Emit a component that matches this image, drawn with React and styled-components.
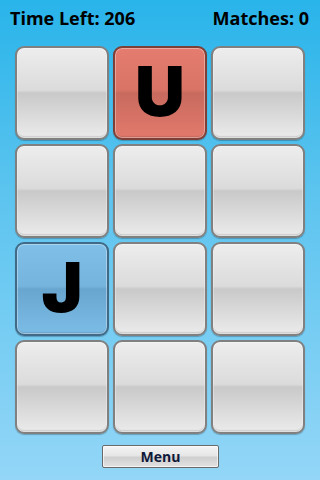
import React from 'react'
import styled, { createGlobalStyle } from 'styled-components'

const GlobalStyle = createGlobalStyle`
  html, body {
    margin: 0;
    padding: 0;
  }
  body {
    font-family: "Open Sans", "DejaVu Sans", sans-serif;
  }
`

const cards = [
  { id: 0 },
  { id: 1, letter: 'U', tone: 'red' },
  { id: 2 },
  { id: 3 },
  { id: 4 },
  { id: 5 },
  { id: 6, letter: 'J', tone: 'blue' },
  { id: 7 },
  { id: 8 },
  { id: 9 },
  { id: 10 },
  { id: 11 },
]

const tones = {
  gray: { top: '#ededed', mid: '#dbdbdb', band: '#c9c9c9', bottom: '#ebebeb', edge: '#808080' },
  red: { top: '#e47d70', mid: '#d87366', band: '#c86a5e', bottom: '#e27a6c', edge: '#7d3f36' },
  blue: { top: '#80c0e8', mid: '#75b4dd', band: '#69a6cf', bottom: '#7bbce6', edge: '#416a88' },
}

const App = () => {
  return (
    <Screen>
      <GlobalStyle />
      <Header>
        <span>Time Left: 206</span>
        <span>Matches: 0</span>
      </Header>
      <Board>
        {cards.map((c) => (
          <Tile key={c.id} $tone={c.tone || 'gray'}>
            {c.letter}
          </Tile>
        ))}
      </Board>
      <Footer>
        <MenuButton>Menu</MenuButton>
      </Footer>
    </Screen>
  )
}

export default App

const Screen = styled.div`
  width: 320px;
  height: 480px;
  overflow: hidden;
  display: flex;
  flex-direction: column;
  background: linear-gradient(to bottom, #29b4ea 0%, #5cc4ef 40%, #93d6f7 100%);
`

const Header = styled.div`
  height: 36px;
  padding: 0 11px 0 10px;
  display: flex;
  align-items: center;
  justify-content: space-between;
  font-size: 18px;
  font-weight: 700;
  color: #000;
  line-height: 1;
`

const Board = styled.div`
  margin-top: 10px;
  padding-left: 15px;
  display: grid;
  grid-template-columns: repeat(3, 94px);
  grid-auto-rows: 94px;
  gap: 4px;
`

const Tile = styled.div`
  box-sizing: border-box;
  border-radius: 9px;
  border: 2px solid ${(p) => tones[p.$tone].edge};
  box-shadow: inset 0 0 0 1px rgba(255, 255, 255, 0.35), inset 0 -2px 1px rgba(0, 0, 0, 0.12),
    0 1px 1px rgba(0, 0, 0, 0.25);
  background: linear-gradient(
    to bottom,
    ${(p) => tones[p.$tone].top} 0%,
    ${(p) => tones[p.$tone].mid} 47%,
    ${(p) => tones[p.$tone].band} 50%,
    ${(p) => tones[p.$tone].bottom} 100%
  );
  display: flex;
  align-items: center;
  justify-content: center;
  padding-bottom: 3px;
  font-family: Inter, "Open Sans", sans-serif;
  font-size: 69px;
  font-weight: 900;
  color: #000;
  line-height: 1;
`

const Footer = styled.div`
  margin-top: 11px;
  display: flex;
  justify-content: center;
`

const MenuButton = styled.button`
  box-sizing: border-box;
  width: 117px;
  height: 23px;
  margin-left: 1px;
  padding: 0;
  border: 1px solid #6a6a6a;
  border-radius: 2px;
  background: linear-gradient(to bottom, #f4f4f4 0%, #e6e6e6 45%, #cfcfcf 55%, #e2e2e2 100%);
  box-shadow: inset 0 0 0 1px rgba(255, 255, 255, 0.6);
  font-family: "Open Sans", "DejaVu Sans", sans-serif;
  font-size: 14px;
  font-weight: 700;
  color: #10183a;
  line-height: 1;
`
